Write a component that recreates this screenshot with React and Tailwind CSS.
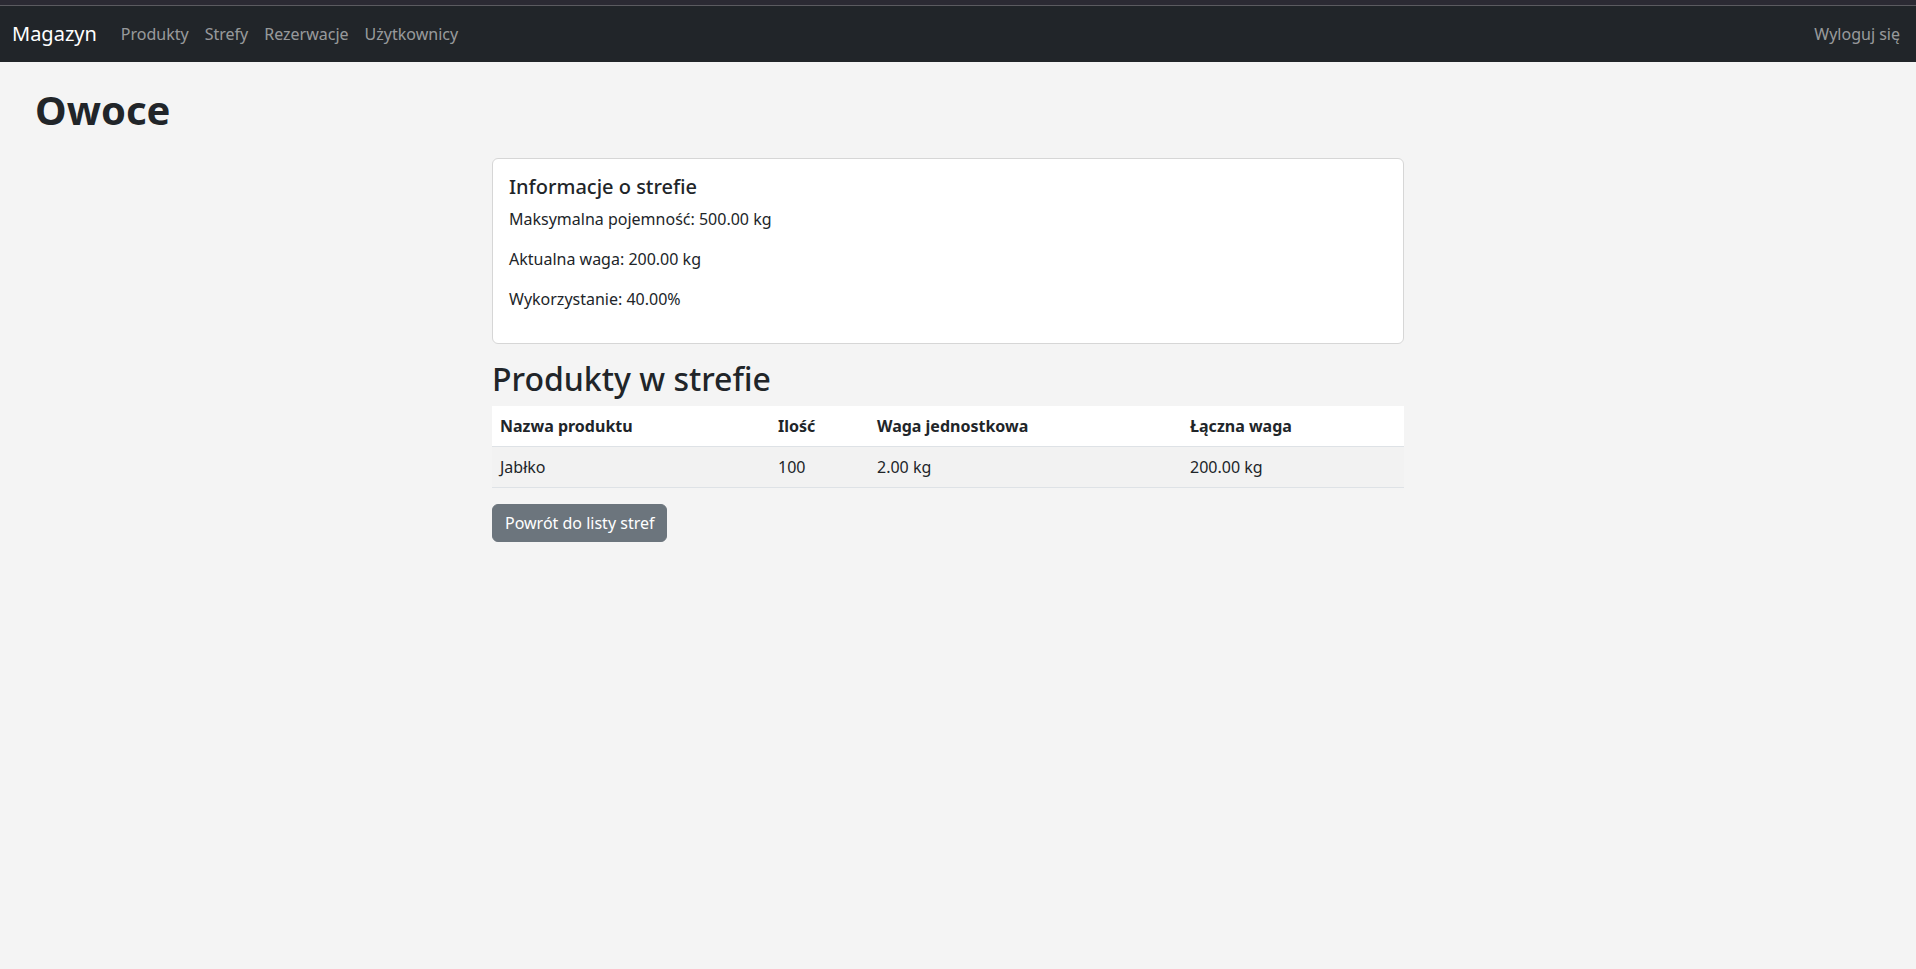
import React from "react";

const navLinks = ["Produkty", "Strefy", "Rezerwacje", "Użytkownicy"];

const products = [
  { name: "Jabłko", qty: "100", unit: "2.00 kg", total: "200.00 kg" },
];

export default function App() {
  return (
    <div className="min-h-[969px] bg-[#f4f4f4] text-[#212529] font-['Noto_Sans',sans-serif] text-base leading-6">
      {/* top strip */}
      <div className="h-[5px] bg-[#2b2a33]" />
      <div className="h-px bg-[#5b5b60]" />

      {/* Navbar */}
      <nav className="bg-[#212529] h-[56px] pl-3 pr-2 flex items-center justify-between">
        <div className="flex items-center">
          <span className="text-[20px] leading-[30px] py-[5px] mr-4 text-white">Magazyn</span>
          <div className="flex">
            {navLinks.map((l) => (
              <span key={l} className="px-2 py-2 text-[#ffffff8c]">
                {l}
              </span>
            ))}
          </div>
        </div>
        <span className="px-2 py-2 text-[#ffffff8c]">Wyloguj się</span>
      </nav>

      {/* Content */}
      <main className="pt-6">
        <h1 className="pl-[35px] text-[40px] leading-[48px] font-bold mb-6">Owoce</h1>

        <div className="ml-[492px] w-[912px]">
          <div className="bg-white border border-[#d6d6d6] rounded-md p-4 mb-4">
            <h5 className="text-[20px] leading-6 font-medium mb-2">Informacje o strefie</h5>
            <p className="mb-4">Maksymalna pojemność: 500.00 kg</p>
            <p className="mb-4">Aktualna waga: 200.00 kg</p>
            <p className="mb-4">Wykorzystanie: 40.00%</p>
          </div>

          <h2 className="text-[32px] leading-[38px] font-medium mb-2">Produkty w strefie</h2>

          <table className="w-full border-collapse mb-4 text-left">
            <thead>
              <tr className="bg-white border-b border-[#dee2e6]">
                <th className="w-[278px] px-2 py-2 font-bold">Nazwa produktu</th>
                <th className="w-[99px] px-2 py-2 font-bold">Ilość</th>
                <th className="w-[313px] px-2 py-2 font-bold">Waga jednostkowa</th>
                <th className="px-2 py-2 font-bold">Łączna waga</th>
              </tr>
            </thead>
            <tbody>
              {products.map((p) => (
                <tr key={p.name} className="bg-[#f2f2f2] border-b border-[#dee2e6]">
                  <td className="px-2 py-2">{p.name}</td>
                  <td className="px-2 py-2">{p.qty}</td>
                  <td className="px-2 py-2">{p.unit}</td>
                  <td className="px-2 py-2">{p.total}</td>
                </tr>
              ))}
            </tbody>
          </table>

          <button className="bg-[#6c757d] border border-[#6c757d] text-white rounded-md px-3 py-1.5 leading-6">
            Powrót do listy stref
          </button>
        </div>
      </main>
    </div>
  );
}
